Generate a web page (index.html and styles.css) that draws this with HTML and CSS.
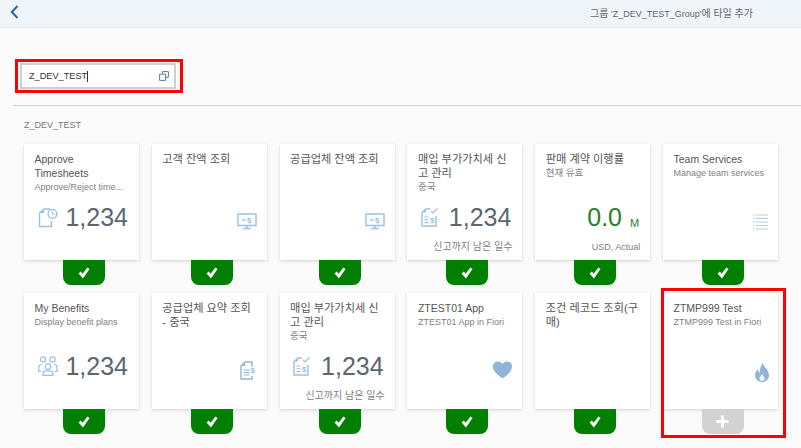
FILE: index.html
```html
<!DOCTYPE html>
<html lang="ko">
<head>
  <meta charset="UTF-8" />
  <title>타일 추가</title>
  <link rel="stylesheet" href="styles.css">
</head>
<body>
  <svg class="defs" width="0" height="0" aria-hidden="true">
    <symbol id="check" viewBox="0 0 12 12">
      <path d="M0.6 6.600 L2.800 4.500 L4.600 6.700 L9.400 0.400 L11.600 1.900 L5 11.600 Z" fill="#fff"/>
    </symbol>
  </svg>

  <header class="topbar">
    <a class="back" href="#">
      <svg width="9" height="14" viewBox="0 0 9 14"><path d="M7.5 1 L1.8 7 L7.5 13" fill="none" stroke="#2f6497" stroke-width="2"/></svg>
    </a>
    <span class="topbar-title"><span class="ko">그룹</span> 'Z_DEV_TEST_Group'<span class="ko">에 타일 추가</span></span>
  </header>

  <div class="search-area">
    <div class="search-mark">
      <div class="search-input">
        <span class="search-text">Z_DEV_TEST</span><span class="caret"></span>
        <svg class="search-icon" width="10" height="10" viewBox="0 0 10 10">
          <path d="M3.5 2.8 V0.6 H9.4 V6.2 H7 M0.6 3.2 H6.6 V9.4 H0.6 Z" fill="none" stroke="#4f7fa8" stroke-width="1"/>
        </svg>
      </div>
    </div>
  </div>

  <main class="group">
    <div class="group-title">Z_DEV_TEST</div>
    <div class="tiles">

      <div class="tile-wrap">
        <div class="tile">
          <div class="tile-head">
            <div class="tile-title">Approve<br>Timesheets</div>
            <div class="tile-sub">Approve/Reject time...</div>
          </div>
          <div class="tile-kpi">
            <svg class="icon" width="20" height="22" viewBox="0 0 20 22">
              <path d="M12 3 H6 L1.5 7 V20.5 H13.5 V15" fill="none" stroke="#9dbfe0" stroke-width="1.4"/>
              <path d="M6 3 V7 H1.5 Z" fill="#9dbfe0"/>
              <circle cx="14.5" cy="8" r="4.4" fill="none" stroke="#9dbfe0" stroke-width="1.4"/>
              <path d="M14.5 5.5 V8 H17" fill="none" stroke="#9dbfe0" stroke-width="1"/>
            </svg>
            <span class="kpi-num">1,234</span>
          </div>
          <div class="tile-foot"></div>
        </div>
        <div class="toggle"><svg width="12" height="12"><use href="#check"/></svg></div>
      </div>

      <div class="tile-wrap">
        <div class="tile">
          <div class="tile-head">
            <div class="tile-title tile-title-ko">고객 잔액 조회</div>
          </div>
          <div class="tile-kpi tile-kpi-end">
            <svg class="icon" width="20" height="17" viewBox="0 0 20 17">
              <path d="M1 1 H19 V12.5 H1 Z" fill="none" stroke="#9dbfe0" stroke-width="1.4"/>
              <path d="M6 15.5 H14 M10 12.5 V15.5" stroke="#9dbfe0" stroke-width="1.6"/>
              <path d="M5 7 H9" stroke="#9dbfe0" stroke-width="1.2"/>
              <text x="10" y="10" class="icon-dollar">$</text>
            </svg>
          </div>
          <div class="tile-foot"></div>
        </div>
        <div class="toggle"><svg width="12" height="12"><use href="#check"/></svg></div>
      </div>

      <div class="tile-wrap">
        <div class="tile">
          <div class="tile-head">
            <div class="tile-title tile-title-ko">공급업체 잔액 조회</div>
          </div>
          <div class="tile-kpi tile-kpi-end">
            <svg class="icon" width="20" height="17" viewBox="0 0 20 17">
              <path d="M1 1 H19 V12.5 H1 Z" fill="none" stroke="#9dbfe0" stroke-width="1.4"/>
              <path d="M6 15.5 H14 M10 12.5 V15.5" stroke="#9dbfe0" stroke-width="1.6"/>
              <path d="M5 7 H9" stroke="#9dbfe0" stroke-width="1.2"/>
              <text x="10" y="10" class="icon-dollar">$</text>
            </svg>
          </div>
          <div class="tile-foot"></div>
        </div>
        <div class="toggle"><svg width="12" height="12"><use href="#check"/></svg></div>
      </div>

      <div class="tile-wrap">
        <div class="tile">
          <div class="tile-head">
            <div class="tile-title tile-title-ko">매입 부가가치세 신<br>고 관리</div>
            <div class="tile-sub tile-sub-ko">중국</div>
          </div>
          <div class="tile-kpi">
            <svg class="icon" width="18" height="20" viewBox="0 0 18 20">
              <path d="M9 2 H5 L1 5.5 V19 H15 V9" fill="none" stroke="#9dbfe0" stroke-width="1.4"/>
              <path d="M5 2 V5.5 H1 Z" fill="#9dbfe0"/>
              <path d="M10 4 L12 6 L16.5 1.5" fill="none" stroke="#9dbfe0" stroke-width="1.2"/>
              <path d="M3.5 10 H7.5 M3.5 12.8 H7.5 M3.5 15.6 H7.5" stroke="#9dbfe0" stroke-width="1.1"/>
              <text x="9" y="15.5" class="icon-dollar">$</text>
            </svg>
            <span class="kpi-num">1,234</span>
          </div>
          <div class="tile-foot tile-foot-ko">신고까지 남은 일수</div>
        </div>
        <div class="toggle"><svg width="12" height="12"><use href="#check"/></svg></div>
      </div>

      <div class="tile-wrap">
        <div class="tile">
          <div class="tile-head">
            <div class="tile-title tile-title-ko">판매 계약 이행률</div>
            <div class="tile-sub tile-sub-ko">현재 유효</div>
          </div>
          <div class="tile-kpi tile-kpi-end tile-kpi-value">
            <span class="kpi-num kpi-green">0.0</span>
            <span class="kpi-unit">M</span>
          </div>
          <div class="tile-foot">USD, Actual</div>
        </div>
        <div class="toggle"><svg width="12" height="12"><use href="#check"/></svg></div>
      </div>

      <div class="tile-wrap">
        <div class="tile">
          <div class="tile-head">
            <div class="tile-title">Team Services</div>
            <div class="tile-sub">Manage team services</div>
          </div>
          <div class="tile-kpi tile-kpi-end">
            <svg class="icon" width="15" height="16" viewBox="0 0 15 16">
              <path d="M3 1 H15 M3 4.5 H15 M3 8 H15 M3 11.500 H15 M3 15 H15" stroke="#b5cfe8" stroke-width="1.2"/>
              <path d="M0 1 H1.500 M0 4.5 H1.500 M0 8 H1.500 M0 11.500 H1.500 M0 15 H1.500" stroke="#b5cfe8" stroke-width="1.2"/>
            </svg>
          </div>
          <div class="tile-foot"></div>
        </div>
        <div class="toggle"><svg width="12" height="12"><use href="#check"/></svg></div>
      </div>

      <div class="tile-wrap">
        <div class="tile">
          <div class="tile-head">
            <div class="tile-title">My Benefits</div>
            <div class="tile-sub">Display benefit plans</div>
          </div>
          <div class="tile-kpi">
            <svg class="icon" width="20" height="20" viewBox="0 0 20 20">
              <g fill="none" stroke="#9dbfe0" stroke-width="1.2">
                <circle cx="5" cy="3.500" r="2.600"/>
                <circle cx="14.500" cy="3.500" r="2.600"/>
                <circle cx="10" cy="10.500" r="2.800"/>
                <path d="M3 15.500 H0.800 V11 Q0.800 8.500 4 8.500"/>
                <path d="M16.500 15.500 H19 V11 Q19 8.500 16 8.500"/>
                <path d="M5 19.300 V17.500 Q5 14.800 8 14.800 H12 Q15 14.800 15 17.500 V19.300 Z"/>
              </g>
            </svg>
            <span class="kpi-num">1,234</span>
          </div>
          <div class="tile-foot"></div>
        </div>
        <div class="toggle"><svg width="12" height="12"><use href="#check"/></svg></div>
      </div>

      <div class="tile-wrap">
        <div class="tile">
          <div class="tile-head">
            <div class="tile-title tile-title-ko">공급업체 요약 조회<br>- 중국</div>
          </div>
          <div class="tile-kpi tile-kpi-end tile-kpi-doc">
            <svg class="icon" width="16" height="19" viewBox="0 0 16 19">
              <path d="M12 6 V1 H5 L1 5 V18 H12 V15" fill="none" stroke="#8fb5da" stroke-width="1.4"/>
              <path d="M5 1 V5 H1 Z" fill="#8fb5da"/>
              <path d="M3.500 9 H9.500 M3.500 11.500 H9.500 M3.500 14 H9.500" stroke="#8fb5da" stroke-width="1.2"/>
              <text x="10.500" y="12" class="icon-dollar">$</text>
            </svg>
          </div>
          <div class="tile-foot"></div>
        </div>
        <div class="toggle"><svg width="12" height="12"><use href="#check"/></svg></div>
      </div>

      <div class="tile-wrap">
        <div class="tile">
          <div class="tile-head">
            <div class="tile-title tile-title-ko">매입 부가가치세 신<br>고 관리</div>
            <div class="tile-sub tile-sub-ko">중국</div>
          </div>
          <div class="tile-kpi">
            <svg class="icon" width="18" height="20" viewBox="0 0 18 20">
              <path d="M9 2 H5 L1 5.5 V19 H15 V9" fill="none" stroke="#9dbfe0" stroke-width="1.4"/>
              <path d="M5 2 V5.5 H1 Z" fill="#9dbfe0"/>
              <path d="M10 4 L12 6 L16.5 1.5" fill="none" stroke="#9dbfe0" stroke-width="1.2"/>
              <path d="M3.5 10 H7.5 M3.5 12.8 H7.5 M3.5 15.6 H7.5" stroke="#9dbfe0" stroke-width="1.1"/>
              <text x="9" y="15.5" class="icon-dollar">$</text>
            </svg>
            <span class="kpi-num">1,234</span>
          </div>
          <div class="tile-foot tile-foot-ko">신고까지 남은 일수</div>
        </div>
        <div class="toggle"><svg width="12" height="12"><use href="#check"/></svg></div>
      </div>

      <div class="tile-wrap">
        <div class="tile">
          <div class="tile-head">
            <div class="tile-title">ZTEST01 App</div>
            <div class="tile-sub">ZTEST01 App in Fiori</div>
          </div>
          <div class="tile-kpi tile-kpi-end">
            <svg class="icon" width="19" height="18" viewBox="0 0 19 18">
              <path d="M9.500 17.500 C3 13 0 9.500 0 5.500 C0 2.200 2.500 0.500 5 0.500 C7 0.500 8.500 1.500 9.500 3 C10.500 1.500 12 0.500 14 0.500 C16.500 0.500 19 2.200 19 5.500 C19 9.500 16 13 9.500 17.500 Z" fill="#8fb5da"/>
            </svg>
          </div>
          <div class="tile-foot"></div>
        </div>
        <div class="toggle"><svg width="12" height="12"><use href="#check"/></svg></div>
      </div>

      <div class="tile-wrap">
        <div class="tile">
          <div class="tile-head">
            <div class="tile-title tile-title-ko">조건 레코드 조회(구<br>매)</div>
          </div>
          <div class="tile-kpi tile-kpi-end"></div>
          <div class="tile-foot"></div>
        </div>
        <div class="toggle"><svg width="12" height="12"><use href="#check"/></svg></div>
      </div>

      <div class="tile-wrap tile-wrap-marked">
        <div class="tile">
          <div class="tile-head">
            <div class="tile-title">ZTMP999 Test</div>
            <div class="tile-sub">ZTMP999 Test in Fiori</div>
          </div>
          <div class="tile-kpi tile-kpi-end tile-kpi-flame">
            <svg class="icon" width="14" height="19" viewBox="0 0 14 19">
              <path d="M7.500 0 C8.500 3.500 14 6.500 14 12.500 C14 16.500 10.500 19 7 19 C3.500 19 0 16.500 0 12.500 C0 9.500 1.500 7.500 3 6 C3 8 3.500 9.500 4.500 10 C4.500 6.500 6 3 7.500 0 Z M7 11 C6 13 4.500 14 4.500 15.500 C4.500 17 5.700 18 7 18 C8.500 18 9.500 17 9.500 15.500 C9.500 14 8 13 7 11 Z" fill="#8fb5da" fill-rule="evenodd"/>
            </svg>
          </div>
          <div class="tile-foot"></div>
        </div>
        <div class="toggle toggle-add">
          <svg width="13" height="13" viewBox="0 0 13 13"><path d="M6.500 0.500 V12.500 M0.500 6.500 H12.500" stroke="#fff" stroke-width="3"/></svg>
        </div>
      </div>

    </div>
  </main>
</body>
</html>
```

FILE: styles.css
```css
* {
  box-sizing: border-box;
}
html, body {
  height: 100%;
}
body {
  margin: 0;
  height: 448px;
  overflow: hidden;
  background: #fafafa;
  color: #4a4a4a;
  font-family: "Liberation Sans", "Noto Sans CJK KR", sans-serif;
}
.defs {
  display: block;
  height: 0;
}
.topbar {
  height: 28px;
  background: #eff4f9;
  border-bottom: 1px solid #e1e8ef;
  display: flex;
  align-items: center;
  justify-content: space-between;
  padding: 0 48px 2px 10px;
}
.back {
  display: flex;
  height: 14px;
  margin-top: -1px;
}
.topbar-title {
  font-size: 9px;
  color: #666;
}
.ko {
  font-size: 10px;
}
.search-area {
  height: 77px;
  padding: 31px 0 0 15px;
}
.search-mark {
  width: 168px;
  height: 34px;
  border: 3px solid #f00;
  padding: 0 4px 0 2px;
  display: flex;
  align-items: center;
}
.search-input {
  width: 156px;
  height: 26px;
  background: #fff;
  border: 2px solid #cfcfcf;
  display: flex;
  align-items: center;
  padding: 0 5px 0 7px;
  font-size: 9.2px;
  color: #333;
}
.caret {
  width: 1px;
  height: 11px;
  background: #333;
}
.search-icon {
  margin-left: auto;
}
.group {
  margin-left: 13px;
  border-top: 1px solid #cfcfcf;
  padding: 14px 0 0 11px;
}
.group-title {
  font-size: 9px;
  line-height: 11px;
  color: #777;
  margin-bottom: 13px;
}
.tiles {
  display: grid;
  grid-template-columns: repeat(6, 115px);
  column-gap: 12.8px;
  row-gap: 8px;
}
.tile-wrap {
  position: relative;
  display: flex;
  flex-direction: column;
}
.tile-wrap-marked::after {
  content: "";
  position: absolute;
  left: -2px;
  right: -8px;
  top: -5px;
  bottom: -4px;
  border: 3px solid #f00;
}
.tile {
  width: 115px;
  height: 116px;
  background: #fff;
  box-shadow: 0 1px 3px rgba(0, 0, 0, 0.16);
  padding: 8px 6px 6px 10.5px;
  display: flex;
  flex-direction: column;
}
.tile-head {
  height: 49px;
}
.tile-title {
  font-size: 10.5px;
  line-height: 14px;
  color: #555;
}
.tile-title-ko {
  font-size: 11.2px;
}
.tile-sub {
  font-size: 9px;
  line-height: 14px;
  color: #808080;
  white-space: nowrap;
}
.tile-sub-ko {
  font-size: 9.5px;
}
.tile-kpi {
  height: 32px;
  display: flex;
  align-items: center;
  justify-content: space-between;
  padding: 0 5px 0 3px;
}
.tile-kpi-end {
  justify-content: flex-end;
  align-items: flex-end;
  padding: 0 4px 3px 0;
}
.tile-kpi-value {
  padding: 0 4px 0 0;
}
.tile-kpi-doc {
  padding: 0 5px 2px 0;
}
.tile-kpi-flame {
  padding: 0 3px 0 0;
}
.kpi-num {
  font-size: 25px;
  line-height: 32px;
  color: #5a6770;
}
.kpi-green {
  color: #2b7d2b;
}
.kpi-unit {
  font-size: 11px;
  line-height: 12px;
  margin: 0 1px 4px 8px;
  color: #2b7d2b;
}
.icon {
  flex-shrink: 0;
}
.icon-dollar {
  font-family: "Liberation Sans", sans-serif;
  font-size: 8px;
  font-weight: bold;
  fill: #9dbfe0;
}
.tile-foot {
  height: 14px;
  margin-top: 7px;
  padding-right: 4px;
  font-size: 9px;
  line-height: 14px;
  color: #808080;
  text-align: right;
  white-space: nowrap;
}
.tile-foot-ko {
  font-size: 10px;
}
.toggle {
  width: 42px;
  height: 25px;
  margin-left: 39px;
  background: #007f00;
  border-radius: 0 0 8px 8px;
  display: flex;
  align-items: center;
  justify-content: center;
}
.toggle-add {
  background: #d2d2d2;
}
```
